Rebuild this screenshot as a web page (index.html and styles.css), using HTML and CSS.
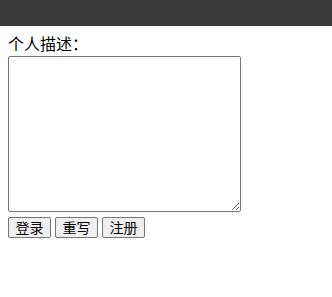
FILE: index.html
```html
<!DOCTYPE html>
<html lang="zh-CN">
<head>
    <meta charset="UTF-8">
    <title>个人描述</title>
    <link rel="stylesheet" href="styles.css">
</head>
<body>
    <div class="top-bar"></div>
    <form class="main">
        <label class="desc-label" for="desc">个人描述：</label>
        <textarea id="desc" class="desc-input"></textarea>
        <div class="actions">
            <button type="button" class="btn">登录</button>
            <button type="reset" class="btn">重写</button>
            <button type="button" class="btn">注册</button>
        </div>
    </form>
</body>
</html>
```

FILE: styles.css
```css
body {
    margin: 0;
    font-family: "Liberation Sans", "Noto Sans CJK SC", sans-serif;
    background-color: white;
}
.top-bar {
    height: 26px;
    background-color: #3a3a3a;
}
.main {
    padding: 8px;
}
.desc-label {
    display: block;
    font-size: 16px;
    line-height: 22px;
    color: black;
}
.desc-input {
    display: block;
    box-sizing: border-box;
    width: 233px;
    height: 156px;
    margin: 0;
    border: 1px solid #767676;
    border-radius: 2px;
}
.actions {
    display: flex;
    gap: 4px;
    margin-top: 5px;
}
.btn {
    box-sizing: border-box;
    width: 43px;
    height: 21px;
    font-family: "Noto Sans CJK SC", sans-serif;
    font-size: 14px;
    line-height: 17px;
    padding: 1px 0;
    margin: 0;
    border: 1px solid #767676;
    border-radius: 2px;
    background-color: #efefef;
    color: black;
}
```
